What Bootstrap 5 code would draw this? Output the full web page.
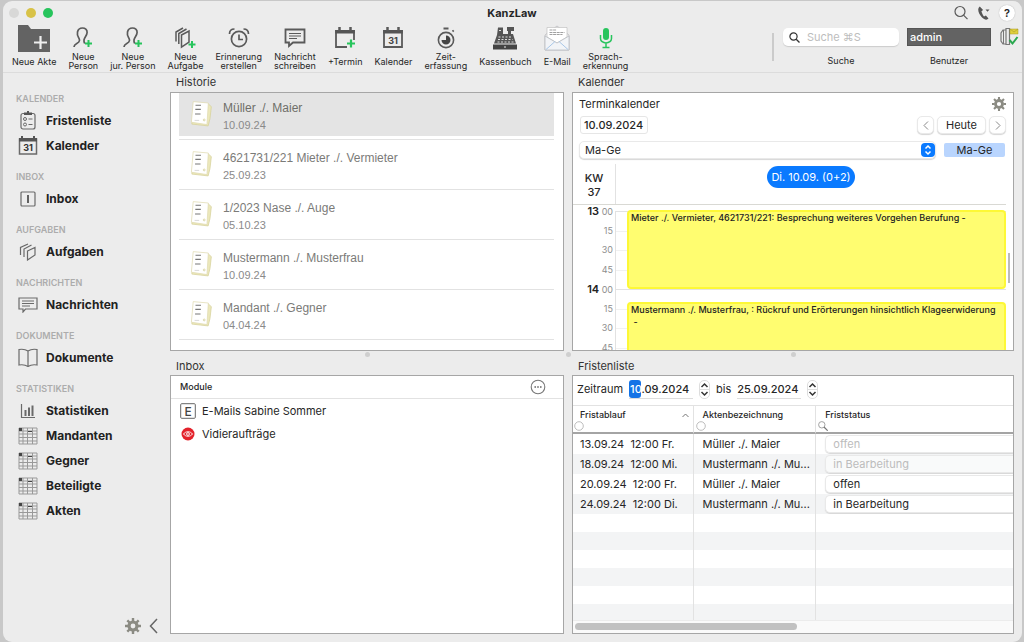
<!DOCTYPE html>
<html lang="de">
<head>
<meta charset="utf-8">
<meta name="viewport" content="width=device-width, initial-scale=1">
<title>KanzLaw</title>
<link href="https://cdn.jsdelivr.net/npm/bootstrap@5.3.0/dist/css/bootstrap.min.css" rel="stylesheet">
<style>
  :root { --ink:#262626; --line:#a6a6a6; --soft:#e2e2e2; --icon:#5a5a5a; --green:#27c45c; --blue:#0a7aff; }
  body { background:#c8c8c8; color:var(--ink); font-family:Inter,"Liberation Sans",sans-serif; font-size:11px; line-height:16px; }
  svg { display:block; flex:none; fill:none; stroke:var(--icon); stroke-width:1.5; }
  button, input, select { font:inherit; color:inherit; }
  a { color:inherit; text-decoration:none; }
  .window { height:100vh; min-height:560px; padding:1px 2px 0 3px; }
  .window-body { background:#ececec; border-radius:9px; overflow:hidden; }
  /* title bar and toolbar */
  .titlebar { display:grid; grid-template-columns:1fr auto 1fr; height:23px; padding:0 7px 0 6px; }
  .light { width:10px; height:10px; border-radius:50%; }
  .light.shut { background:#d8d8d7; } .light.mini { background:#d8c247; } .light.full { background:#27c45c; }
  .help { width:16px; height:16px; border-radius:50%; background:#fff; box-shadow:0 0 1px #999; font-weight:600; }
  .toolbar { height:49px; border-bottom:1px solid #dcdcdc; padding:0 3px 0 9px; font-size:9px; line-height:9px; }
  .tools { gap:12px; }
  .tool { background:none; border:0; padding:0; line-height:9px; }
  .tool-icon { height:26px; display:flex; align-items:center; justify-content:center; }
  .tool-text { height:21px; display:flex; align-items:center; justify-content:center; white-space:nowrap; }
  .separator { width:2px; height:28px; background:#cbcbcb; margin-top:9px; margin-right:9px; }
  .searchbox { width:116px; height:18px; background:#fff; border-radius:5px; box-shadow:0 1px 1px #ccc; padding:0 6px; }
  .searchbox input { border:0; outline:0; background:none; font-size:11px; width:86px; padding:0; }
  .searchbox input::placeholder { color:#bdbdbd; opacity:1; }
  .userbox { width:84px; height:18px; background:#636363; color:#fff; border:1px solid #555; font-size:11px; font-weight:500; padding:0 2px; line-height:16px; }
  /* sidebar */
  .sidebar { width:167px; padding:7px 0 0 13px; flex:none; }
  .sidebar h2 { font-size:9px; line-height:12px; font-weight:600; color:#acacac; margin:0; padding:13px 0 3px; height:28px; }
  .sidebar .entry { display:flex; align-items:center; height:25px; font-size:12px; font-weight:700; color:#222; }
  .entry .pic { width:24px; margin-right:6px; display:flex; justify-content:center; }
  .entry svg { stroke-width:1.2; stroke:#6a6a6a; }
  /* pane grid */
  .panes { display:grid; grid-template-columns:394fr 8px 442fr; grid-template-rows:19px minmax(0,1fr) 7px 17px minmax(0,1fr); padding:0 8px 8px 0; min-width:0; }
  .panes h3 { font-size:11px; font-weight:400; line-height:19px; margin:0; padding-left:6px; color:#333; }
  .panes h3.lower { line-height:17px; }
  .pane { background:#fff; border:1px solid var(--line); min-width:0; overflow:hidden; }
  .grip { width:5px; height:5px; border-radius:50%; background:#cfcfcf; place-self:center; }
  /* history */
  .history { margin:-3px 9px 0 8px; font-family:"Liberation Sans",Arial,sans-serif; }
  .history li { height:50px; padding-bottom:3px; border-bottom:1px solid var(--soft); }
  .history a { display:flex; height:46px; padding:10px 0 0 11px; color:#7b7b78; }
  .history .current { background:#e4e4e4; color:#6f6f69; }
  .history .what { font-size:12px; line-height:17px; }
  .history .when { font-size:11px; line-height:16px; color:#8a8a8a; }
  .history svg { margin-right:11px; }
  /* inbox */
  .inbox-head { height:23px; border-bottom:1px solid var(--soft); padding:0 17px 0 9px; font-size:9px; font-weight:500; }
  .inbox-row { height:23px; padding-left:9px; }
  .inbox-row .pic { width:16px; margin-right:6px; display:flex; justify-content:center; }
  /* calendar */
  .cal-title { height:22px; padding:0 7px 0 6px; }
  .cal-date { height:20px; padding:0 7px; gap:3px; }
  .cal-pick { height:22px; padding:0 8px 0 6px; margin-top:4px; gap:8px; }
  .soft-ctl { background:#fff; border:1px solid #e9e9e9; border-radius:5px; box-shadow:0 1px 1px #d6d6d6; height:18px; padding:0; line-height:16px; }
  .datefield { border:0; background:#fff; height:18px; padding:0; outline:0; font-weight:500; }
  .boxed { border:1px solid #e6e6e6; border-radius:3px; width:68px; padding-left:3px; }
  .nav-btn { width:17px; display:flex; align-items:center; justify-content:center; }
  .today-btn { width:49px; }
  .picker { position:relative; flex:1; }
  .picker select { appearance:none; width:100%; padding-left:5px; display:block; }
  .picker .knob { position:absolute; right:1px; top:2px; width:14px; height:14px; border-radius:4px; background:var(--blue); pointer-events:none; }
  .owner { width:61px; height:14px; line-height:14px; background:#b9d5fe; border-radius:2px; text-align:center; }
  .axis { width:43px; flex:none; border-right:1px solid var(--soft); }
  .day-head { height:41px; border-bottom:1px solid #d9d9d4; margin:3px 7px 0 0; }
  .day-head .axis { line-height:14px; font-weight:500; text-align:center; padding-top:7px; }
  .daypill { background:var(--blue); color:#fff; border-radius:11px; height:22px; line-height:22px; width:88px; margin-top:2px; white-space:nowrap; text-align:center; }
  .hours { position:relative; min-height:0; overflow:hidden; flex:1; padding-top:6px; margin-right:7px; }
  .hour { height:78px; display:grid; grid-template-rows:repeat(4,1fr); }
  .quarter { display:flex; color:#8e8e8e; font-size:9px; line-height:10px; }
  .quarter .axis { text-align:right; padding-right:2px; }
  .quarter .axis span { position:relative; top:-5px; }
  .quarter .axis b { font-size:11px; color:#222; font-weight:600; line-height:10px; }
  .quarter .slot { flex:1; border-top:1px solid #f1f1f1; }
  .quarter:first-child .slot { border-color:var(--soft); }
  .event { position:absolute; left:54px; right:0; height:79px; background:#fffd70; border:2px solid #fdf836; border-radius:4px; font-size:9px; line-height:12px; font-weight:500; padding:0 2px; color:#222; }
  .event.one { top:5px; } .event.two { top:97px; }
  .thumb-v { position:absolute; right:3px; top:160px; width:2px; height:30px; background:#bbb; }
  /* deadlines */
  .range { height:30px; border-bottom:1px solid var(--soft); padding:0 0 3px 4px; gap:6px; }
  .range .datefield { width:64px; box-shadow:0 1px 0 #ddd; white-space:nowrap; line-height:18px; }
  .range .picked { background:#1473e6; color:#fff; border-radius:3px; padding:2px 0 2px 1px; }
  .stepper { width:11px; height:19px; border:1px solid #ddd; border-radius:5px; background:#fff; padding:0; }
  .deadlines { width:100%; table-layout:fixed; border-collapse:separate; border-spacing:0; }
  .deadlines th { height:28px; padding:3px 0 0 7px; font-size:9px; line-height:12px; font-weight:500; border-bottom:2px solid #a4a4a4; vertical-align:top; }
  .deadlines th svg { margin-left:-6px; }
  .deadlines td { height:20px; padding:0 0 0 7px; line-height:18px; white-space:nowrap; overflow:hidden; }
  .deadlines th:not(:last-child), .deadlines td:not(:last-child) { border-right:1px solid var(--soft); }
  .deadlines td + td, .deadlines th + th { padding-left:9px; }
  .deadlines th + th svg { margin-left:-7px; }
  .deadlines tbody tr:nth-child(even) td { background:#f3f4f5; }
  .deadlines .spare td { height:18px; }
  .deadlines select { appearance:none; display:block; width:100%; height:18px; padding-left:7px; border-radius:5px 0 0 5px; border-right:0; }
  .deadlines select:disabled { color:#bcbcbc; opacity:1; background:#fff8; }
  .track { position:absolute; left:0; right:0; bottom:0; height:13px; background:#fafafa; border-top:1px solid #ececec; padding:2px; }
  .track div { width:51%; height:7px; border-radius:4px; background:#c1c1c1; }
</style>
</head>
<body>
<svg width="0" height="0" class="position-absolute">
  <symbol id="i-person" viewBox="0 0 22 24"><path d="M2 21c0-4 5-3 5.500-6.500C7.800 12 4.500 10.500 5.500 6c.6-2.800 2.500-4 5-4s4.800 1.400 4.600 4.500C15 9.500 12.500 11 12 14c-.2 1.500 0 2.500 .7 3.500" stroke-width="1.700"/><path d="M16.500 14v7M13 17.500h7" stroke="#27c45c" stroke-width="2"/></symbol>
  <symbol id="i-table" viewBox="0 0 20 18"><path d="M1 1h18v16H1zM1 4h18M1 7h18M1 10.500h18M1 14h18M5 1v16M9.500 1v16M14.500 1v16" stroke-width="1" stroke="#999"/><path d="M1 1h3v3H1zM10 4h4v1h-4z" fill="#444" stroke="none"/></symbol>
  <symbol id="i-gear" viewBox="0 0 16 16"><circle cx="8" cy="8" r="4" stroke="#8b8b83" stroke-width="3.200"/><path d="M8 0v3M8 13v3M0 8h3M13 8h3M2.300 2.300l2.200 2.200M11.500 11.500l2.200 2.200M2.300 13.700l2.200-2.200M11.500 4.500l2.200-2.200" stroke="#8b8b83" stroke-width="2.400"/></symbol>
  <symbol id="i-step" viewBox="0 0 9 17"><path d="M1.500 6l3-3 3 3M1.500 11l3 3 3-3" stroke="#333" stroke-width="1.500"/><path d="M0 8.500h9" stroke="#ddd" stroke-width="1"/></symbol>
  <symbol id="i-paper" viewBox="0 0 24 30"><path d="M5 4h15l3.300 3-1.500 13-2 8L2 26z" fill="#ece8bb" stroke="#d6d09a" stroke-width=".8"/><path d="M3.500 1.500L20 3l-1.500 23.500L1.500 24z" fill="#fff" stroke="#dfdab0" stroke-width=".8"/><path d="M6 5.500h6M5.800 10h6M5.500 15h6" stroke="#777" stroke-width="1.200"/><path d="M5 22h5" stroke="#ccc" stroke-width=".8"/><circle cx="15.500" cy="21.500" r="1" stroke="#cdc88e" stroke-width=".8"/></symbol>
</svg>

<div class="window">
<div class="window-body d-flex flex-column h-100">
  <header>
    <div class="titlebar align-items-center">
      <div class="d-flex align-items-center" style="gap:7px">
        <span class="light shut"></span><span class="light mini"></span><span class="light full"></span>
      </div>
      <strong>KanzLaw</strong>
      <div class="d-flex justify-content-end align-items-center">
        <svg width="16" height="16" viewBox="0 0 16 16"><circle cx="7" cy="6.500" r="5" stroke-width="1.200"/><path d="M10.500 10.200l4 4" stroke-width="1.200"/></svg>
        <svg class="mx-2" width="14" height="16" viewBox="0 0 14 16"><path d="M2.800 1.500C-.5 4 2 9.500 4.800 12.200c2.600 2.500 5 3.300 6.700 1.300l-2.600-3-1.900 1C6 10.500 5 8.500 4.400 6.300l1.700-1.200z" fill="#555" stroke="none"/><path d="M8.500 4.500h4l-2 2.300z" fill="#555" stroke="none"/></svg>
        <button class="help border-0 p-0 d-flex align-items-center justify-content-center" type="button">?</button>
      </div>
    </div>

    <div class="toolbar d-flex">
      <nav class="tools d-flex">
        <button class="tool" type="button"><span class="tool-icon"><svg width="34" height="28" viewBox="0 0 34 28"><path d="M1 1h10l3 4h19v23H1z" fill="#636363" stroke="none"/><path d="M23.500 12v13M17 18.500h13" stroke="#eee" stroke-width="2.200"/></svg></span><span class="tool-text">Neue Akte</span></button>
        <button class="tool" type="button"><span class="tool-icon"><svg width="22" height="24"><use href="#i-person"/></svg></span><span class="tool-text">Neue<br>Person</span></button>
        <button class="tool" type="button"><span class="tool-icon"><svg width="22" height="24"><use href="#i-person"/></svg></span><span class="tool-text">Neue<br>jur. Person</span></button>
        <button class="tool" type="button"><span class="tool-icon"><svg width="22" height="22" viewBox="0 0 22 22"><path d="M7.500 8L15 4v11l-7.500 5zM4.800 17V6.500L12.500 2M2 14.500V5L9 1" stroke-width="1.500"/><path d="M18 14v7M14.500 17.500h7" stroke="#27c45c" stroke-width="2"/></svg></span><span class="tool-text">Neue<br>Aufgabe</span></button>
        <button class="tool" type="button"><span class="tool-icon"><svg width="22" height="22" viewBox="0 0 22 22"><circle cx="11" cy="12" r="7.600" stroke-width="1.700"/><path d="M11 7.500V12.500h4M1.500 7c0-3 2-5 5-5M20.500 7c0-3-2-5-5-5" stroke-width="1.700"/></svg></span><span class="tool-text">Erinnerung<br>erstellen</span></button>
        <button class="tool" type="button"><span class="tool-icon"><svg width="22" height="20" viewBox="0 0 22 20"><path d="M1.500 1.500h19v13H9l-4 3.500v-3.500H1.500z" stroke-width="1.800"/><path d="M5 5.500h12M5 8h12M5 10.500h8" stroke-width="1"/></svg></span><span class="tool-text">Nachricht<br>schreiben</span></button>
        <button class="tool" type="button"><span class="tool-icon"><svg width="22" height="22" viewBox="0 0 22 22"><path d="M20 13V4H2v16h11" stroke-width="1.800"/><path d="M1.200 3h19.600v3.500H1.200z" fill="#555" stroke="none"/><path d="M5.500 0v4M16.500 0v4" stroke-width="2.500"/><path d="M17 12.500v8M13 16.500h8" stroke="#27c45c" stroke-width="2.200"/></svg></span><span class="tool-text">+Termin</span></button>
        <button class="tool" type="button"><span class="tool-icon"><svg width="22" height="22" viewBox="0 0 22 22"><path d="M2 4h18v16H2z" stroke-width="1.800"/><path d="M1.200 3h19.600v3.500H1.200z" fill="#555" stroke="none"/><path d="M5.500 0v4M16.500 0v4" stroke-width="2.500"/><text x="11" y="16.500" text-anchor="middle" font-size="9" font-weight="700" fill="#444" stroke="none">31</text></svg></span><span class="tool-text">Kalender</span></button>
        <button class="tool" type="button"><span class="tool-icon"><svg width="20" height="22" viewBox="0 0 20 22"><circle cx="10" cy="13" r="7.600" stroke-width="1.600"/><path d="M10 8.500A4.500 4.500 0 1 1 5.500 13H10z" fill="#444" stroke="none"/><path d="M7.500 1.500h5M16.500 4.500l1.200-1.200" stroke-width="1.800"/></svg></span><span class="tool-text">Zeit-<br>erfassung</span></button>
        <button class="tool" type="button"><span class="tool-icon"><svg width="26" height="24" viewBox="0 0 26 24"><path d="M5 9l1-7.500h5V8h5V5h-1V1h7v4h-3v3h2l3 9.500H2z" fill="#555" stroke="none"/><path d="M1 18.500h24v5H1z" fill="#444" stroke="none"/><path d="M7 4.500h3M6.500 11h13M6 13.500h14.500M5.500 16h16" stroke="#ddd" stroke-width="1" stroke-dasharray="2 1.500"/><path d="M12 21h2" stroke="#eee" stroke-width="1"/></svg></span><span class="tool-text">Kassenbuch</span></button>
        <button class="tool" type="button"><span class="tool-icon"><svg width="26" height="26" viewBox="0 0 26 26"><path d="M1 10L13 1l12 9v15H1z" fill="#efeff0" stroke="#bdbdc0" stroke-width=".8"/><path d="M3 2.500h20V12l-10 6L3 12z" fill="#fff" stroke="#bbb" stroke-width=".6"/><path d="M5.500 5h7M5.500 7.500h15M5.500 9.500h13" stroke="#888" stroke-width=".8" stroke-dasharray="3 .6"/><path d="M1 11l12 7 12-7v14H1z" fill="#f2f4f7" stroke="#b9bcc2" stroke-width=".8"/><path d="M2 24.500l9-8M24 24.500l-9-8" stroke="#a9c7e8" stroke-width="1"/></svg></span><span class="tool-text">E-Mail</span></button>
        <button class="tool" type="button"><span class="tool-icon"><svg width="14" height="22" viewBox="0 0 14 22"><rect x="4" y="1" width="6" height="12" rx="3" fill="#27c45c" stroke="none"/><path d="M1.500 8v3.500a5.500 4.500 0 0 0 11 0V8M7 16v4M3.500 20.500h7" stroke="#27c45c" stroke-width="1.500"/></svg></span><span class="tool-text">Sprach-<br>erkennung</span></button>
      </nav>
      <div class="separator ms-auto"></div>
      <div class="me-2 text-center">
        <div class="tool-icon"><div class="searchbox d-flex align-items-center"><svg width="11" height="11" viewBox="0 0 11 11"><circle cx="4.500" cy="4.500" r="3.600" stroke="#333" stroke-width="1.200"/><path d="M7.200 7.200l3.300 3.300" stroke="#333" stroke-width="1.300"/></svg><input class="ms-auto" id="suche" type="text" placeholder="Suche ⌘S"></div></div>
        <label class="tool-text" for="suche">Suche</label>
      </div>
      <div>
        <div class="tool-icon"><input class="userbox" id="benutzer" type="text" value="admin"></div>
        <label class="tool-text" for="benutzer">Benutzer</label>
      </div>
      <div class="tool-icon ms-2"><svg width="20" height="20" viewBox="0 0 20 20"><path d="M7 3H4L2 6v8l2 3h3M7 1.500h3.500v16H7z" stroke="#777" stroke-width="1.200"/><path d="M4.500 3v14" stroke="#777" stroke-width="1"/><path d="M11 2h8v5h-8z" fill="#e0cf3d" stroke="#a99b28" stroke-width=".5"/><path d="M11 2l4 3 4-3" stroke="#a99b28" stroke-width=".6"/><path d="M10.500 13l3 3.500L18.500 10" stroke="#2aa84f" stroke-width="2"/></svg></div>
    </div>
  </header>

  <div class="d-flex flex-grow-1" style="min-height:0">
    <aside class="sidebar d-flex flex-column">
      <h2>KALENDER</h2>
      <a class="entry" href="#"><span class="pic"><svg width="16" height="19" viewBox="0 0 16 19"><rect x="1" y="2.500" width="14" height="15.500" rx="2"/><path d="M4 1.500h8v2.500H4zM7 0h2v2H7z" fill="#555" stroke="none"/><circle cx="5" cy="8" r="1.500" stroke-width="1"/><circle cx="5" cy="13.500" r="1.500" stroke-width="1"/><path d="M8.500 8h4M8.500 13.500h4"/></svg></span>Fristenliste</a>
      <a class="entry" href="#"><span class="pic"><svg width="20" height="19" viewBox="0 0 20 19"><path d="M1.500 3h17v15h-17z" stroke-width="1.500"/><path d="M1 2h18v3.500H1zM3 0h2v3H3zM15 0h2v3h-2z" fill="#555" stroke="none"/><text x="10" y="15" text-anchor="middle" font-size="9" fill="#333" stroke="none">31</text></svg></span>Kalender</a>
      <h2>INBOX</h2>
      <a class="entry" href="#"><span class="pic"><svg width="16" height="16" viewBox="0 0 16 16"><rect x="1" y="1" width="14" height="14" rx="1"/><path d="M8 4v8" stroke="#333" stroke-width="1.500"/></svg></span>Inbox</a>
      <h2>AUFGABEN</h2>
      <a class="entry" href="#"><span class="pic"><svg width="18" height="18" viewBox="0 0 18 18"><path d="M8.500 8L16 4.500V12L8.500 17zM5 14V6l7.500-4M1.500 12V4.500L9 1"/></svg></span>Aufgaben</a>
      <h2>NACHRICHTEN</h2>
      <a class="entry" href="#"><span class="pic"><svg width="20" height="16" viewBox="0 0 20 16"><path d="M1 1h18v11H7.500L5 15v-3H1z"/><path d="M4 4h12M4 6.500h12M4 9h8" stroke-width="1"/></svg></span>Nachrichten</a>
      <h2>DOKUMENTE</h2>
      <a class="entry" href="#"><span class="pic"><svg width="20" height="19" viewBox="0 0 20 19"><path d="M10 3v15M10 3C7 1 4 1 1 1.500V17c3-.5 6-.5 9 1.500M10 3c3-2 6-2 9-1.500V17c-3-.5-6-.5-9 1.500"/></svg></span>Dokumente</a>
      <h2>STATISTIKEN</h2>
      <a class="entry" href="#"><span class="pic"><svg width="16" height="16" viewBox="0 0 16 16"><path d="M1.500 1v13.500H15"/><path d="M5.500 13V7M9 13V4.500M12.500 13V2.500" stroke-width="2"/></svg></span>Statistiken</a>
      <a class="entry" href="#"><span class="pic"><svg width="20" height="18"><use href="#i-table"/></svg></span>Mandanten</a>
      <a class="entry" href="#"><span class="pic"><svg width="20" height="18"><use href="#i-table"/></svg></span>Gegner</a>
      <a class="entry" href="#"><span class="pic"><svg width="20" height="18"><use href="#i-table"/></svg></span>Beteiligte</a>
      <a class="entry" href="#"><span class="pic"><svg width="20" height="18"><use href="#i-table"/></svg></span>Akten</a>
      <div class="mt-auto d-flex justify-content-end align-items-center gap-2 pb-2 me-2">
        <button class="tool" type="button" aria-label="Einstellungen"><svg width="16" height="16"><use href="#i-gear"/></svg></button>
        <button class="tool me-1" type="button" aria-label="Einklappen"><svg width="9" height="16" viewBox="0 0 9 16"><path d="M8 1L1.500 8 8 15" stroke="#666"/></svg></button>
      </div>
    </aside>

    <main class="panes flex-grow-1">
      <h3>Historie</h3><span></span><h3>Kalender</h3>

      <section class="pane">
        <ul class="history list-unstyled mb-0">
          <li><a class="current" href="#"><svg width="22" height="28"><use href="#i-paper"/></svg><div><div class="what">Müller ./. Maier</div><div class="when">10.09.24</div></div></a></li>
          <li><a href="#"><svg width="22" height="28"><use href="#i-paper"/></svg><div><div class="what">4621731/221 Mieter ./. Vermieter</div><div class="when">25.09.23</div></div></a></li>
          <li><a href="#"><svg width="22" height="28"><use href="#i-paper"/></svg><div><div class="what">1/2023 Nase ./. Auge</div><div class="when">05.10.23</div></div></a></li>
          <li><a href="#"><svg width="22" height="28"><use href="#i-paper"/></svg><div><div class="what">Mustermann ./. Musterfrau</div><div class="when">10.09.24</div></div></a></li>
          <li><a href="#"><svg width="22" height="28"><use href="#i-paper"/></svg><div><div class="what">Mandant ./. Gegner</div><div class="when">04.04.24</div></div></a></li>
        </ul>
      </section>
      <span></span>
      <section class="pane d-flex flex-column position-relative">
        <div class="cal-title d-flex justify-content-between align-items-center">
          <span>Terminkalender</span>
          <button class="tool" type="button" aria-label="Einstellungen"><svg width="14" height="14"><use href="#i-gear"/></svg></button>
        </div>
        <div class="cal-date d-flex align-items-center">
          <input class="datefield boxed" type="text" value="10.09.2024" aria-label="Datum">
          <button class="soft-ctl nav-btn ms-auto" type="button" aria-label="Zurück"><svg width="6" height="9" viewBox="0 0 6 9"><path d="M5 .5l-4 4 4 4" stroke="#888" stroke-width="1"/></svg></button>
          <button class="soft-ctl today-btn" type="button">Heute</button>
          <button class="soft-ctl nav-btn" type="button" aria-label="Weiter"><svg width="6" height="9" viewBox="0 0 6 9"><path d="M1 .5l4 4-4 4" stroke="#888" stroke-width="1"/></svg></button>
        </div>
        <div class="cal-pick d-flex align-items-center">
          <div class="picker">
            <select class="soft-ctl" aria-label="Kalenderauswahl"><option>Ma-Ge</option></select>
            <span class="knob"><svg width="14" height="14" viewBox="0 0 14 14"><path d="M4.500 5.500L7 3l2.500 2.500M4.500 8.500L7 11l2.500-2.500" stroke="#fff" stroke-width="1.500"/></svg></span>
          </div>
          <span class="owner">Ma-Ge</span>
        </div>
        <div class="day-head d-flex">
          <div class="axis">KW<br>37</div>
          <div class="flex-grow-1 d-flex justify-content-center"><span class="daypill">Di. 10.09. (0+2)</span></div>
        </div>
        <div class="hours">
          <div class="hour">
            <div class="quarter"><div class="axis"><span><b>13</b> 00</span></div><div class="slot"></div></div>
            <div class="quarter"><div class="axis"><span>15</span></div><div class="slot"></div></div>
            <div class="quarter"><div class="axis"><span>30</span></div><div class="slot"></div></div>
            <div class="quarter"><div class="axis"><span>45</span></div><div class="slot"></div></div>
          </div>
          <div class="hour">
            <div class="quarter"><div class="axis"><span><b>14</b> 00</span></div><div class="slot"></div></div>
            <div class="quarter"><div class="axis"><span>15</span></div><div class="slot"></div></div>
            <div class="quarter"><div class="axis"><span>30</span></div><div class="slot"></div></div>
            <div class="quarter"><div class="axis"><span>45</span></div><div class="slot"></div></div>
          </div>
          <div class="event one">Mieter ./. Vermieter, 4621731/221: Besprechung weiteres Vorgehen Berufung -</div>
          <div class="event two">Mustermann ./. Musterfrau, : Rückruf und Erörterungen hinsichtlich Klageerwiderung<br>&nbsp;-</div>
        </div>
        <div class="thumb-v"></div>
      </section>

      <span class="grip"></span><span class="grip"></span><span class="grip"></span>
      <h3 class="lower">Inbox</h3><span></span><h3 class="lower">Fristenliste</h3>

      <section class="pane">
        <div class="inbox-head d-flex align-items-center justify-content-between"><span>Module</span>
          <button class="tool" type="button" aria-label="Mehr"><svg width="16" height="16" viewBox="0 0 16 16"><circle cx="8" cy="8" r="6.800" stroke="#777" stroke-width="1.100"/><path d="M4.500 8h1.400M7.300 8h1.400M10.100 8h1.400" stroke="#555" stroke-width="1.400"/></svg></button></div>
        <a class="inbox-row d-flex align-items-center" href="#"><span class="pic"><svg width="16" height="16" viewBox="0 0 16 16"><rect x=".7" y=".7" width="14.600" height="14.600" rx="1" stroke="#666" stroke-width="1"/><text x="8" y="12.500" text-anchor="middle" font-size="12" font-weight="500" fill="#444" stroke="none">E</text></svg></span>E-Mails Sabine Sommer</a>
        <a class="inbox-row d-flex align-items-center" href="#"><span class="pic"><svg width="14" height="14" viewBox="0 0 14 14"><circle cx="7" cy="7" r="6.500" fill="#e3222b" stroke="none"/><path d="M2.500 7C4.500 4 9.500 4 11.500 7 9.500 10 4.500 10 2.500 7z" stroke="#fff" stroke-width=".9"/><circle cx="7" cy="7" r="1.400" stroke="#fff" stroke-width=".9"/></svg></span>Vidieraufträge</a>
      </section>
      <span></span>
      <section class="pane position-relative">
        <div class="range d-flex align-items-center">
          <span>Zeitraum</span>
          <div class="datefield" role="textbox" tabindex="0" aria-label="Zeitraum von"><span class="picked">10</span>.09.2024</div>
          <button class="stepper" type="button" aria-label="Von ändern"><svg width="9" height="17"><use href="#i-step"/></svg></button>
          <label for="bis">bis</label>
          <input class="datefield" id="bis" type="text" value="25.09.2024">
          <button class="stepper" type="button" aria-label="Bis ändern"><svg width="9" height="17"><use href="#i-step"/></svg></button>
        </div>
        <table class="deadlines">
          <colgroup><col style="width:27.400%"><col style="width:27.900%"><col></colgroup>
          <thead><tr>
            <th><div class="d-flex justify-content-between align-items-center">Fristablauf<svg class="me-1" width="7" height="5" viewBox="0 0 7 5"><path d="M.5 4l3-3 3 3" stroke="#777" stroke-width="1"/></svg></div><svg width="10" height="10" viewBox="0 0 10 10"><circle cx="5" cy="5" r="4.300" stroke="#b5b5b5" stroke-width=".9"/></svg></th>
            <th>Aktenbezeichnung<svg width="10" height="10" viewBox="0 0 10 10"><circle cx="5" cy="5" r="4.300" stroke="#b5b5b5" stroke-width=".9"/></svg></th>
            <th>Friststatus<svg width="10" height="10" viewBox="0 0 10 10"><circle cx="3.800" cy="3.800" r="3.200" stroke="#999" stroke-width=".9"/><path d="M6 6l3.700 3.700" stroke="#777" stroke-width="1.200"/></svg></th>
          </tr></thead>
          <tbody>
            <tr><td>13.09.24&nbsp; 12:00 Fr.</td><td>Müller ./. Maier</td><td><select class="soft-ctl" disabled aria-label="Status"><option>offen</option></select></td></tr>
            <tr><td>18.09.24&nbsp; 12:00 Mi.</td><td>Mustermann ./. Mu...</td><td><select class="soft-ctl" disabled aria-label="Status"><option>in Bearbeitung</option></select></td></tr>
            <tr><td>20.09.24&nbsp; 12:00 Fr.</td><td>Müller ./. Maier</td><td><select class="soft-ctl" aria-label="Status"><option>offen</option></select></td></tr>
            <tr><td>24.09.24&nbsp; 12:00 Di.</td><td>Mustermann ./. Mu...</td><td><select class="soft-ctl" aria-label="Status"><option>in Bearbeitung</option></select></td></tr>
            <tr class="spare"><td></td><td></td><td></td></tr>
            <tr class="spare"><td></td><td></td><td></td></tr>
            <tr class="spare"><td></td><td></td><td></td></tr>
            <tr class="spare"><td></td><td></td><td></td></tr>
            <tr class="spare"><td></td><td></td><td></td></tr>
            <tr class="spare"><td></td><td></td><td></td></tr>
          </tbody>
        </table>
        <div class="track"><div></div></div>
      </section>
    </main>
  </div>
</div>
</div>
<script src="https://cdn.jsdelivr.net/npm/bootstrap@5.3.0/dist/js/bootstrap.bundle.min.js"></script>
</body>
</html>
